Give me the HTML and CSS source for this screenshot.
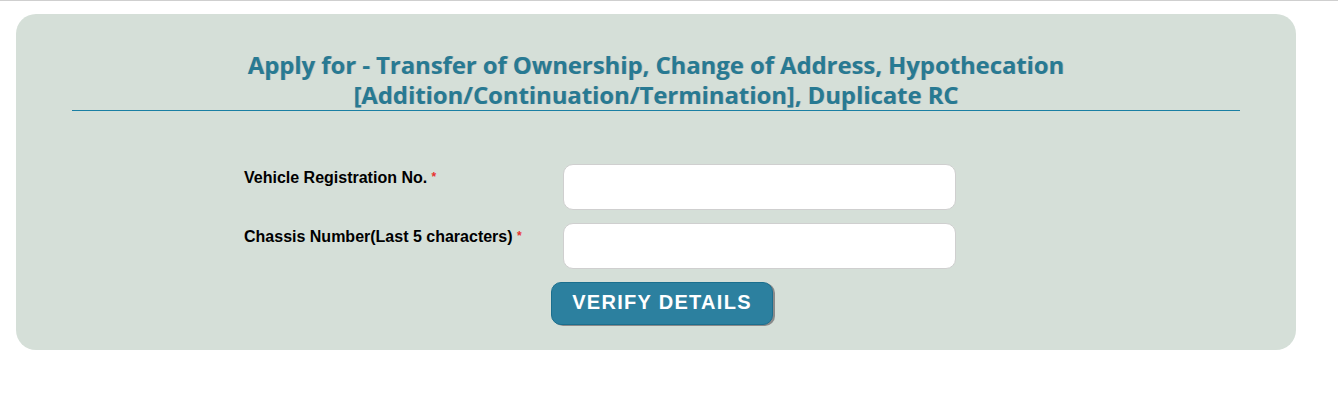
FILE: index.html
```html
<!DOCTYPE html>
<html lang="en">
<head>
<meta charset="utf-8">
<title>Apply for services</title>
<link rel="stylesheet" href="styles.css">
</head>
<body>
<div class="topline"></div>
<div class="panel">
  <h2 class="title">Apply for - Transfer of Ownership, Change of Address, Hypothecation<br>[Addition/Continuation/Termination], Duplicate RC</h2>
  <form class="form">
    <div class="row">
      <label class="label">Vehicle Registration No. <span class="req">*</span></label>
      <input class="field" type="text">
    </div>
    <div class="row">
      <label class="label">Chassis Number(Last 5 characters) <span class="req">*</span></label>
      <input class="field" type="text">
    </div>
    <div class="actions">
      <button type="button" class="btn">VERIFY DETAILS</button>
    </div>
  </form>
</div>
</body>
</html>
```
FILE: styles.css
```css
html, body {
  margin: 0;
  padding: 0;
  background: #ffffff;
}
body {
  font-family: "Liberation Sans", Arial, sans-serif;
}
.topline {
  height: 1px;
  background: #cfcfcf;
}
.panel {
  box-sizing: border-box;
  width: 1280px;
  height: 336px;
  margin: 13px 0 0 16px;
  background: #d5dfd8;
  border-radius: 20px;
  padding: 36px 56px 0 56px;
}
.title {
  margin: 0;
  font-family: "Open Sans", "Liberation Sans", sans-serif;
  font-weight: 700;
  font-size: 23.8px;
  line-height: 30px;
  color: #277a93;
  text-align: center;
  text-shadow: 1px 0 0 rgba(150, 110, 110, 0.35);
  padding-bottom: 0;
  border-bottom: 1px solid #1a7fa3;
}
.form {
  margin: 53px 0 0 172px;
}
.row {
  display: grid;
  grid-template-columns: 319px 393px;
  margin-bottom: 13px;
}
.label {
  font-size: 16px;
  font-weight: 700;
  color: #000;
  padding-top: 5px;
}
.req {
  color: #e8312f;
  font-size: 12px;
  vertical-align: 2px;
}
.field {
  box-sizing: border-box;
  height: 46px;
  border: 1px solid #cfcfcf;
  border-radius: 10px;
  background: #fff;
  margin: 0;
}
.actions {
  padding-left: 307px;
}
.btn {
  box-sizing: border-box;
  width: 222px;
  height: 43px;
  background: #2c809f;
  border: 1px solid #1b6f8e;
  border-radius: 10px;
  box-shadow: 2px 1px 0 #8a8a8a;
  color: #fff;
  font-family: "Liberation Sans", Arial, sans-serif;
  font-weight: 700;
  font-size: 20px;
  letter-spacing: 1.3px;
  padding: 0 0 3px 0;
}
```
